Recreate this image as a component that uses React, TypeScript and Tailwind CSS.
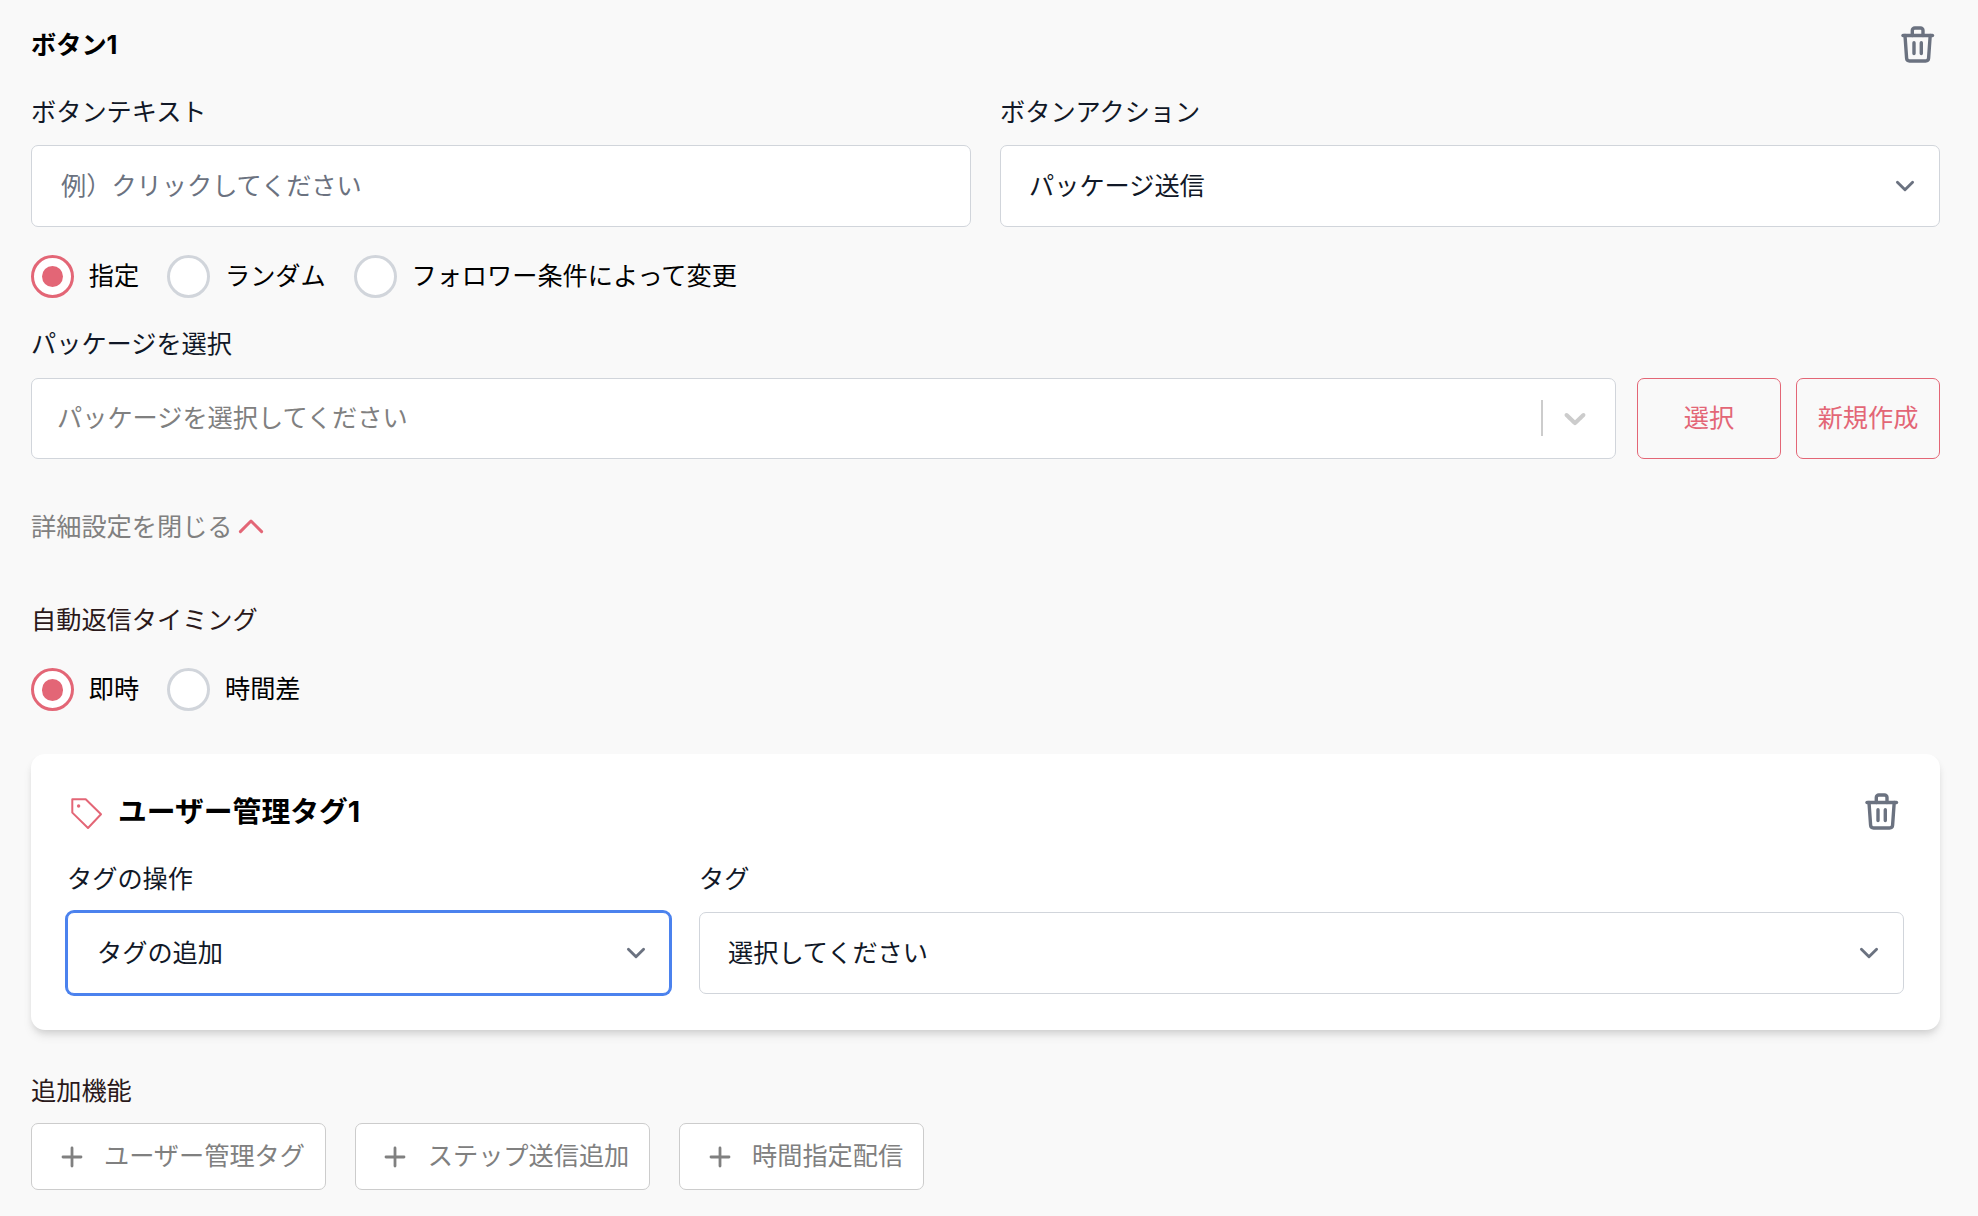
import { useState } from "react";
import type { ReactNode } from "react";
import clsx from "clsx";

const TrashIcon = () => (
  <svg
    width="34"
    height="38"
    viewBox="0 0 34 38"
    fill="none"
    stroke="#6b7280"
    strokeWidth="3.4"
    strokeLinecap="round"
    strokeLinejoin="round"
  >
    <path d="M2 9.5h29.5" />
    <path d="M4 9.5l1.6 22.7a3 3 0 0 0 3 2.8h16a3 3 0 0 0 3-2.8l1.6-22.7" />
    <path d="M11.3 9.5v-5a2.5 2.5 0 0 1 2.5-2.5h5.7a2.5 2.5 0 0 1 2.5 2.5v5" />
    <path d="M13 16.8v10.8M20.3 16.8v10.8" />
  </svg>
);

const ChevronDown = () => (
  <svg
    className="size-[38px] shrink-0"
    viewBox="0 0 20 20"
    fill="none"
    stroke="#6b7280"
    strokeWidth="1.5"
    strokeLinecap="round"
    strokeLinejoin="round"
  >
    <path d="M6 8l4 4 4-4" />
  </svg>
);

const PlusIcon = () => (
  <svg
    className="size-9 shrink-0"
    viewBox="0 0 36 36"
    fill="none"
    stroke="currentColor"
    strokeWidth="2.8"
    strokeLinecap="round"
  >
    <path d="M18 9v18M9 18h18" />
  </svg>
);

const TagIcon = () => (
  <svg
    className="mt-[5px]"
    width="34"
    height="34"
    viewBox="0 0 34 34"
    fill="none"
    stroke="#e36676"
    strokeWidth="2"
    strokeLinejoin="round"
  >
    <path d="M2.3 2.3h13.4l15.3 15L18 31 2.3 15.6z" />
    <circle cx="8.6" cy="9" r="1.7" fill="#e36676" stroke="none" />
  </svg>
);

type SelectProps = {
  label: string;
  value: string;
  focused?: boolean;
};

const SelectField = ({ label, value, focused }: SelectProps) => (
  <div className="min-w-0">
    <p className="h-9">{label}</p>
    <button
      className={clsx(
        "mt-[15px] w-full h-[82px] flex items-center justify-between rounded-[7px] border bg-white text-left",
        focused
          ? "pl-[29px] pr-[14px] border-[#4b82ee] ring-2 ring-[#4b82ee]"
          : "pl-7 pr-[15px] border-[#d1d5db]"
      )}
    >
      <span className="pb-px">{value}</span>
      <ChevronDown />
    </button>
  </div>
);

type RadioGroupProps = {
  options: string[];
};

const RadioGroup = ({ options }: RadioGroupProps) => {
  const [selected, setSelected] = useState(options[0]);

  return (
    <div className="flex gap-7 text-black">
      {options.map((option) => (
        <button
          key={option}
          onClick={() => setSelected(option)}
          className="flex items-center gap-[14.6px]"
        >
          <span
            className={clsx(
              "size-[43.2px] rounded-full border-3 bg-white flex items-center justify-center",
              option === selected ? "border-[#e36676]" : "border-[#d1d5db]"
            )}
          >
            {option === selected && (
              <span className="size-[21.6px] rounded-full bg-[#e36676]" />
            )}
          </span>
          <span className="pb-px">{option}</span>
        </button>
      ))}
    </div>
  );
};

const OutlineButton = ({ children }: { children: ReactNode }) => (
  <button className="w-[144px] h-[81px] pb-0.5 rounded-[7px] border border-[#e36676] text-[#e36676]">
    {children}
  </button>
);

const AddButton = ({ children }: { children: ReactNode }) => (
  <button className="h-[67px] pl-[21.6px] pr-5 flex items-center gap-[14.4px] rounded-[7px] border border-[#ccc] bg-white text-[#808080]">
    <PlusIcon />
    <span className="pb-px">{children}</span>
  </button>
);

export default function App() {
  return (
    <div className="min-h-screen bg-[#f9f9f9] pl-[31px] pr-[38px] pt-[26px] text-[25.2px] leading-9 text-[#111827] font-['Inter','Noto_Sans_CJK_JP',sans-serif]">
      {/* Header */}
      <div className="h-9 flex justify-between pr-[5px]">
        <h2 className="pt-px font-bold text-black">ボタン1</h2>
        <button className="h-[38px]">
          <TrashIcon />
        </button>
      </div>

      {/* Text and action */}
      <div className="mt-8 grid grid-cols-2 gap-[29px]">
        <div>
          <p className="h-9">ボタンテキスト</p>
          <input
            type="text"
            placeholder="例）クリックしてください"
            className="mt-[15px] block w-full h-[82px] px-[29px] pb-px rounded-[7px] border border-[#d1d5db] bg-white placeholder:text-[#6b7280]"
          />
        </div>
        <SelectField label="ボタンアクション" value="パッケージ送信" />
      </div>

      <div className="mt-7">
        <RadioGroup options={["指定", "ランダム", "フォロワー条件によって変更"]} />
      </div>

      {/* Package */}
      <p className="mt-7 h-9">パッケージを選択</p>
      <div className="mt-[16px] flex">
        <div className="flex-1 h-[81px] flex items-center rounded-[7px] border border-[#d1d5db] bg-white pl-[25px] pr-[22px] pb-0.5">
          <span className="flex-1 text-[#808080]">
            パッケージを選択してください
          </span>
          <span className="w-[2px] h-9 bg-[#ccc]" />
          <svg className="ml-[14px] size-9" viewBox="0 0 20 20" fill="#ccc">
            <path d="M4.516 7.548c0.436-0.446 1.043-0.481 1.576 0l3.908 3.747 3.908-3.747c0.533-0.481 1.141-0.446 1.574 0 0.436 0.445 0.408 1.197 0 1.615-0.406 0.418-4.695 4.502-4.695 4.502-0.217 0.223-0.502 0.335-0.787 0.335s-0.57-0.112-0.789-0.335c0 0-4.287-4.084-4.695-4.502s-0.436-1.17 0-1.615z" />
          </svg>
        </div>
        <div className="ml-[21px] flex gap-[15px]">
          <OutlineButton>選択</OutlineButton>
          <OutlineButton>新規作成</OutlineButton>
        </div>
      </div>

      <button className="mt-[50px] h-9 flex items-center gap-[5px] text-[#808080]">
        <span>詳細設定を閉じる</span>
        <svg
          className="mb-0.5"
          width="26"
          height="18"
          viewBox="0 0 26 18"
          fill="none"
          stroke="#e36676"
          strokeWidth="3"
          strokeLinecap="round"
          strokeLinejoin="round"
        >
          <path d="M2.4 14.6L13 4l10.6 10.6" />
        </svg>
      </button>

      {/* Timing */}
      <p className="mt-[57px] h-9 text-[#2b191b]">自動返信タイミング</p>
      <div className="mt-[30px]">
        <RadioGroup options={["即時", "時間差"]} />
      </div>

      {/* Tag card */}
      <div className="mt-[43px] h-[276px] rounded-[14px] bg-white px-9 pt-[39px] shadow-[0_7px_11px_-2px_rgba(0,0,0,0.1),0_4px_7px_-2px_rgba(0,0,0,0.1)]">
        <div className="h-9 flex justify-between pr-[5px]">
          <div className="flex items-center gap-[14px] pl-[3px]">
            <TagIcon />
            <h3 className="pt-px text-[28.8px] font-bold text-black">
              ユーザー管理タグ1
            </h3>
          </div>
          <button className="h-[38px]">
            <TrashIcon />
          </button>
        </div>
        <div className="mt-8 grid grid-cols-[603px_1fr] gap-[29px]">
          <SelectField label="タグの操作" value="タグの追加" focused />
          <SelectField label="タグ" value="選択してください" />
        </div>
      </div>

      {/* Additional features */}
      <p className="mt-[43px] h-9 text-[#2b191b]">追加機能</p>
      <div className="mt-[14px] flex gap-[28.8px]">
        <AddButton>ユーザー管理タグ</AddButton>
        <AddButton>ステップ送信追加</AddButton>
        <AddButton>時間指定配信</AddButton>
      </div>
    </div>
  );
}
